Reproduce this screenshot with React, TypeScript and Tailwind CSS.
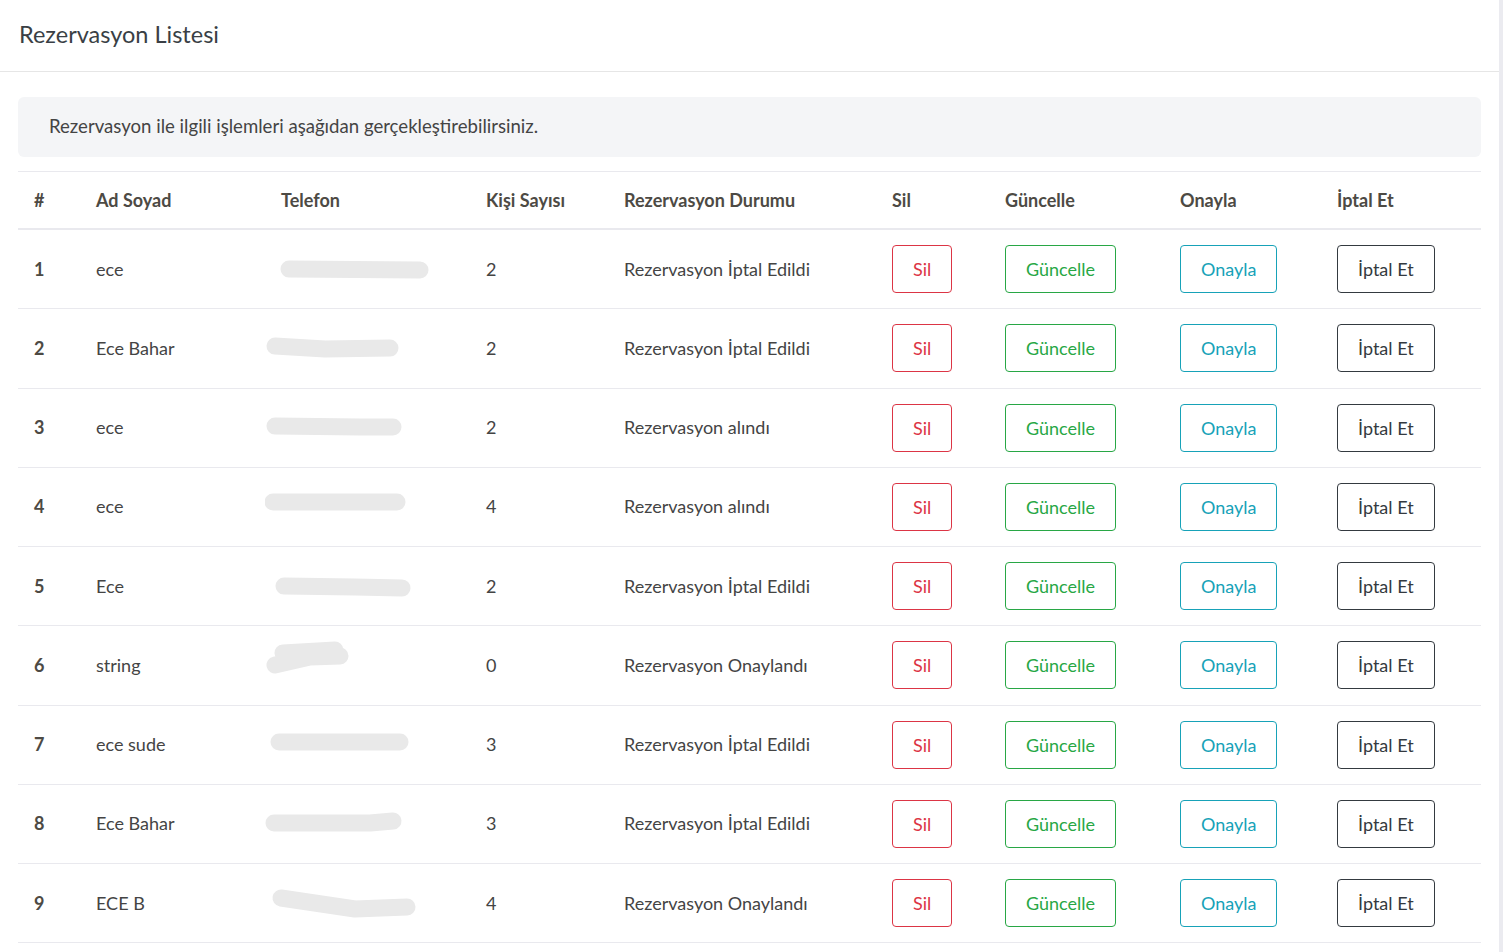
const rows = [
  { id: 1, name: "ece", count: 2, status: "Rezervasyon İptal Edildi", blob: "M24 39 L155 40" },
  { id: 2, name: "Ece Bahar", count: 2, status: "Rezervasyon İptal Edildi", blob: "M10 37 L60 40 L125 39" },
  { id: 3, name: "ece", count: 2, status: "Rezervasyon alındı", blob: "M10 37 L95 38 L128 38" },
  { id: 4, name: "ece", count: 4, status: "Rezervasyon alındı", blob: "M8 34 L132 34" },
  { id: 5, name: "Ece", count: 2, status: "Rezervasyon İptal Edildi", blob: "M19 39 L90 40 L137 41" },
  { id: 6, name: "string", count: 0, status: "Rezervasyon Onaylandı", blob: "M18 27 L70 24 M10 39 L45 31 L75 30" },
  { id: 7, name: "ece sude", count: 3, status: "Rezervasyon İptal Edildi", blob: "M14 36 L135 36" },
  { id: 8, name: "Ece Bahar", count: 3, status: "Rezervasyon İptal Edildi", blob: "M9 38 L105 38 L128 36" },
  { id: 9, name: "ECE B", count: 4, status: "Rezervasyon Onaylandı", blob: "M16 34 L90 45 L142 43" },
]

const cols =
  "grid grid-cols-[62px_185px_205px_138px_268px_113px_175px_157px_159px] items-center"

function Btn({ label, tone }: { label: string; tone: string }) {
  return (
    <button
      className={`h-[48px] rounded-[4px] border px-[20px] text-[18px] leading-none bg-white ${tone}`}
    >
      {label}
    </button>
  )
}

export default function App() {
  return (
    <div
      className="flex min-h-[952px] bg-white text-[#444] text-[18px]"
      style={{ fontFamily: "Lato, 'Noto Sans', sans-serif" }}
    >
      <div className="w-[1499px]">
        <div className="h-[72px] border-b border-[#e6e6e6] flex items-center pl-[19px] pb-[2px]">
          <h1 className="text-[23.5px] text-[#3a3f45]">Rezervasyon Listesi</h1>
        </div>
        <div className="px-[18px] pt-[25px]">
          <div className="h-[60px] rounded-[6px] bg-[#f4f5f7] flex items-center pl-[31px] text-[18.6px] text-[#444]">
            Rezervasyon ile ilgili işlemleri aşağıdan gerçekleştirebilirsiniz.
          </div>
          <div className="mt-[14px] border-t border-[#e9e9ee]">
            <div className={`${cols} h-[58px] border-b-2 border-[#e9e9ee] font-bold text-[#4d4a44]`}>
              <div className="pl-[16px]">#</div>
              <div className="pl-[16px]">Ad Soyad</div>
              <div className="pl-[16px]">Telefon</div>
              <div className="pl-[16px]">Kişi Sayısı</div>
              <div className="pl-[16px]">Rezervasyon Durumu</div>
              <div className="pl-[16px]">Sil</div>
              <div className="pl-[16px]">Güncelle</div>
              <div className="pl-[16px]">Onayla</div>
              <div className="pl-[16px]">İptal Et</div>
            </div>
            {rows.map((r) => (
              <div key={r.id} className={`${cols} h-[79.25px] border-b border-[#e9e9ee]`}>
                <div className="pl-[16px] font-bold text-[#4d4a44]">{r.id}</div>
                <div className="pl-[16px]">{r.name}</div>
                <div className="h-[78px]">
                  <svg width="205" height="78" viewBox="0 0 205 78">
                    <path
                      d={r.blob}
                      fill="none"
                      stroke="#e9e9e9"
                      strokeWidth="17"
                      strokeLinecap="round"
                      strokeLinejoin="round"
                    />
                  </svg>
                </div>
                <div className="pl-[16px]">{r.count}</div>
                <div className="pl-[16px]">{r.status}</div>
                <div className="pl-[16px]">
                  <Btn label="Sil" tone="border-[#dc3545] text-[#dc3545]" />
                </div>
                <div className="pl-[16px]">
                  <Btn label="Güncelle" tone="border-[#28a745] text-[#28a745]" />
                </div>
                <div className="pl-[16px]">
                  <Btn label="Onayla" tone="border-[#17a2b8] text-[#17a2b8]" />
                </div>
                <div className="pl-[16px]">
                  <Btn label="İptal Et" tone="border-[#343a40] text-[#343a40]" />
                </div>
              </div>
            ))}
          </div>
        </div>
      </div>
      <div className="w-[4px] bg-[#ebebf0]" />
    </div>
  )
}
